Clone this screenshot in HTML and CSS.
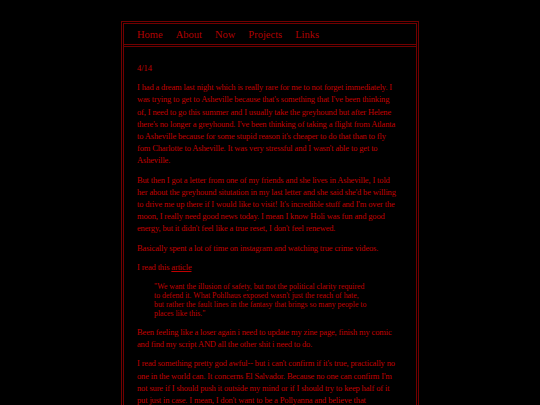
FILE: index.html
```html
<!DOCTYPE html>
<html>
<head>
<meta charset="utf-8">
<link rel="stylesheet" href="styles.css">
</head>
<body>
<div class="page">
  <nav class="nav">
    <a href="#">Home</a>
    <a href="#">About</a>
    <a href="#">Now</a>
    <a href="#">Projects</a>
    <a href="#">Links</a>
  </nav>
  <main class="content">
    <p class="date">4/14</p>
    <p>I had a dream last night which is really rare for me to not forget immediately. I was trying to get to Asheville because that's something that I've been thinking of, I need to go this summer and I usually take the greyhound but after Helene there's no longer a greyhound. I've been thinking of taking a flight from Atlanta to Asheville because for some stupid reason it's cheaper to do that than to fly fom Charlotte to Asheville. It was very stressful and I wasn't able to get to Asheville.</p>
    <p>But then I got a letter from one of my friends and she lives in Asheville, I told her about the greyhound situtation in my last letter and she said she'd be willing to drive me up there if I would like to visit! It's incredible stuff and I'm over the moon, I really need good news today. I mean I know Holi was fun and good energy, but it didn't feel like a true reset, I don't feel renewed.</p>
    <p>Basically spent a lot of time on instagram and watching true crime videos.</p>
    <p>I read this <a class="link" href="#">article</a></p>
    <blockquote class="quote">"We want the illusion of safety, but not the political clarity required to defend it. What Pohlhaus exposed wasn't just the reach of hate, but rather the fault lines in the fantasy that brings so many people to places like this."</blockquote>
    <p>Been feeling like a loser again i need to update my zine page, finish my comic and find my script AND all the other shit i need to do.</p>
    <p>I read something pretty god awful-- but i can't confirm if it's true, practically no one in the world can. It concerns El Salvador. Because no one can confirm I'm not sure if I should push it outside my mind or if I should try to keep half of it put just in case. I mean, I don't want to be a Pollyanna and believe that everything is fine.</p>
  </main>
</div>
</body>
</html>
```
FILE: styles.css
```css
html, body {
  margin: 0;
  padding: 0;
  background: #000;
}
body {
  font-family: "Liberation Serif", "Times New Roman", serif;
  color: #c00000;
}
.page {
  width: 292px;
  margin: 21px auto 0;
  border: 3px double #700000;
  border-bottom: none;
  min-height: 400px;
}
.nav {
  display: flex;
  gap: 13px;
  padding: 0 13px;
  height: 20px;
  align-items: center;
  border-bottom: 3px double #700000;
}
.nav a {
  color: #b00000;
  text-decoration: none;
  font-size: 10.5px;
}
.content {
  padding: 8px 19px 0 13px;
  font-size: 8.5px;
  line-height: 12.2px;
  letter-spacing: -0.15px;
}
.content p {
  margin: 7px 0;
}
.date {
  letter-spacing: 0;
}
.link {
  color: #c00000;
  text-decoration: underline;
}
.quote {
  margin: 9px 28px 8px 17px;
  font-size: 7.8px;
  line-height: 9px;
  padding: 0;
  letter-spacing: 0;
}
```
